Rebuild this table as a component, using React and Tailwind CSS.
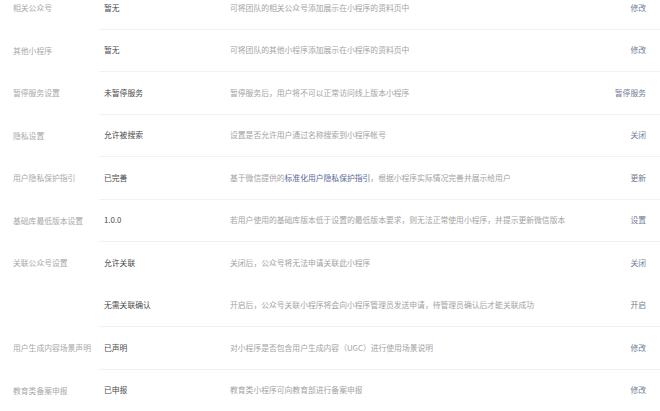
const rows = [
  { label: '相关公众号', value: '暂无', desc: '可将团队的相关公众号添加展示在小程序的资料页中', action: '修改' },
  { label: '其他小程序', value: '暂无', desc: '可将团队的其他小程序添加展示在小程序的资料页中', action: '修改' },
  { label: '暂停服务设置', value: '未暂停服务', desc: '暂停服务后，用户将不可以正常访问线上版本小程序', action: '暂停服务' },
  { label: '隐私设置', value: '允许被搜索', desc: '设置是否允许用户通过名称搜索到小程序帐号', action: '关闭' },
  {
    label: '用户隐私保护指引',
    value: '已完善',
    desc: (
      <>
        基于微信提供的<span className="text-[#576b95]">标准化用户隐私保护指引</span>，根据小程序实际情况完善并展示给用户
      </>
    ),
    action: '更新',
  },
  { label: '基础库最低版本设置', value: '1.0.0', desc: '若用户使用的基础库版本低于设置的最低版本要求，则无法正常使用小程序，并提示更新微信版本', action: '设置' },
  { label: '关联公众号设置', value: '允许关联', desc: '关闭后，公众号将无法申请关联此小程序', action: '关闭', noBorder: true },
  { label: '', value: '无需关联确认', desc: '开启后，公众号关联小程序将会向小程序管理员发送申请，待管理员确认后才能关联成功', action: '开启' },
  { label: '用户生成内容场景声明', value: '已声明', desc: '对小程序是否包含用户生成内容（UGC）进行使用场景说明', action: '修改' },
  { label: '教育类备案申报', value: '已申报', desc: '教育类小程序可向教育部进行备案申报', action: '修改' },
];

export default function App() {
  return (
    <div className="w-[660px] h-[411px] overflow-hidden bg-white font-['Noto_Sans_CJK_SC','Noto_Sans',sans-serif]">
      <div className="-mt-[13px]">
        {rows.map((r, i) => (
          <div key={i} className="flex h-[42.5px]">
            <div className="w-[99px] shrink-0 pl-[13px] flex items-center text-[7.8px] text-[#a8a8a8] whitespace-nowrap">
              {r.label}
            </div>
            <div className={`flex-1 flex items-center ${r.noBorder ? '' : 'border-b border-[#f2f2f2]'}`}>
              <div className="w-[131px] shrink-0 pl-[5px] text-[7.8px] text-[#4a4a4a] whitespace-nowrap">{r.value}</div>
              <div className="flex-1 text-[7.8px] text-[#a3a3a3] whitespace-nowrap">{r.desc}</div>
              <div className="pr-[14px] text-[7.8px] text-[#737d95] whitespace-nowrap">{r.action}</div>
            </div>
          </div>
        ))}
      </div>
    </div>
  );
}
